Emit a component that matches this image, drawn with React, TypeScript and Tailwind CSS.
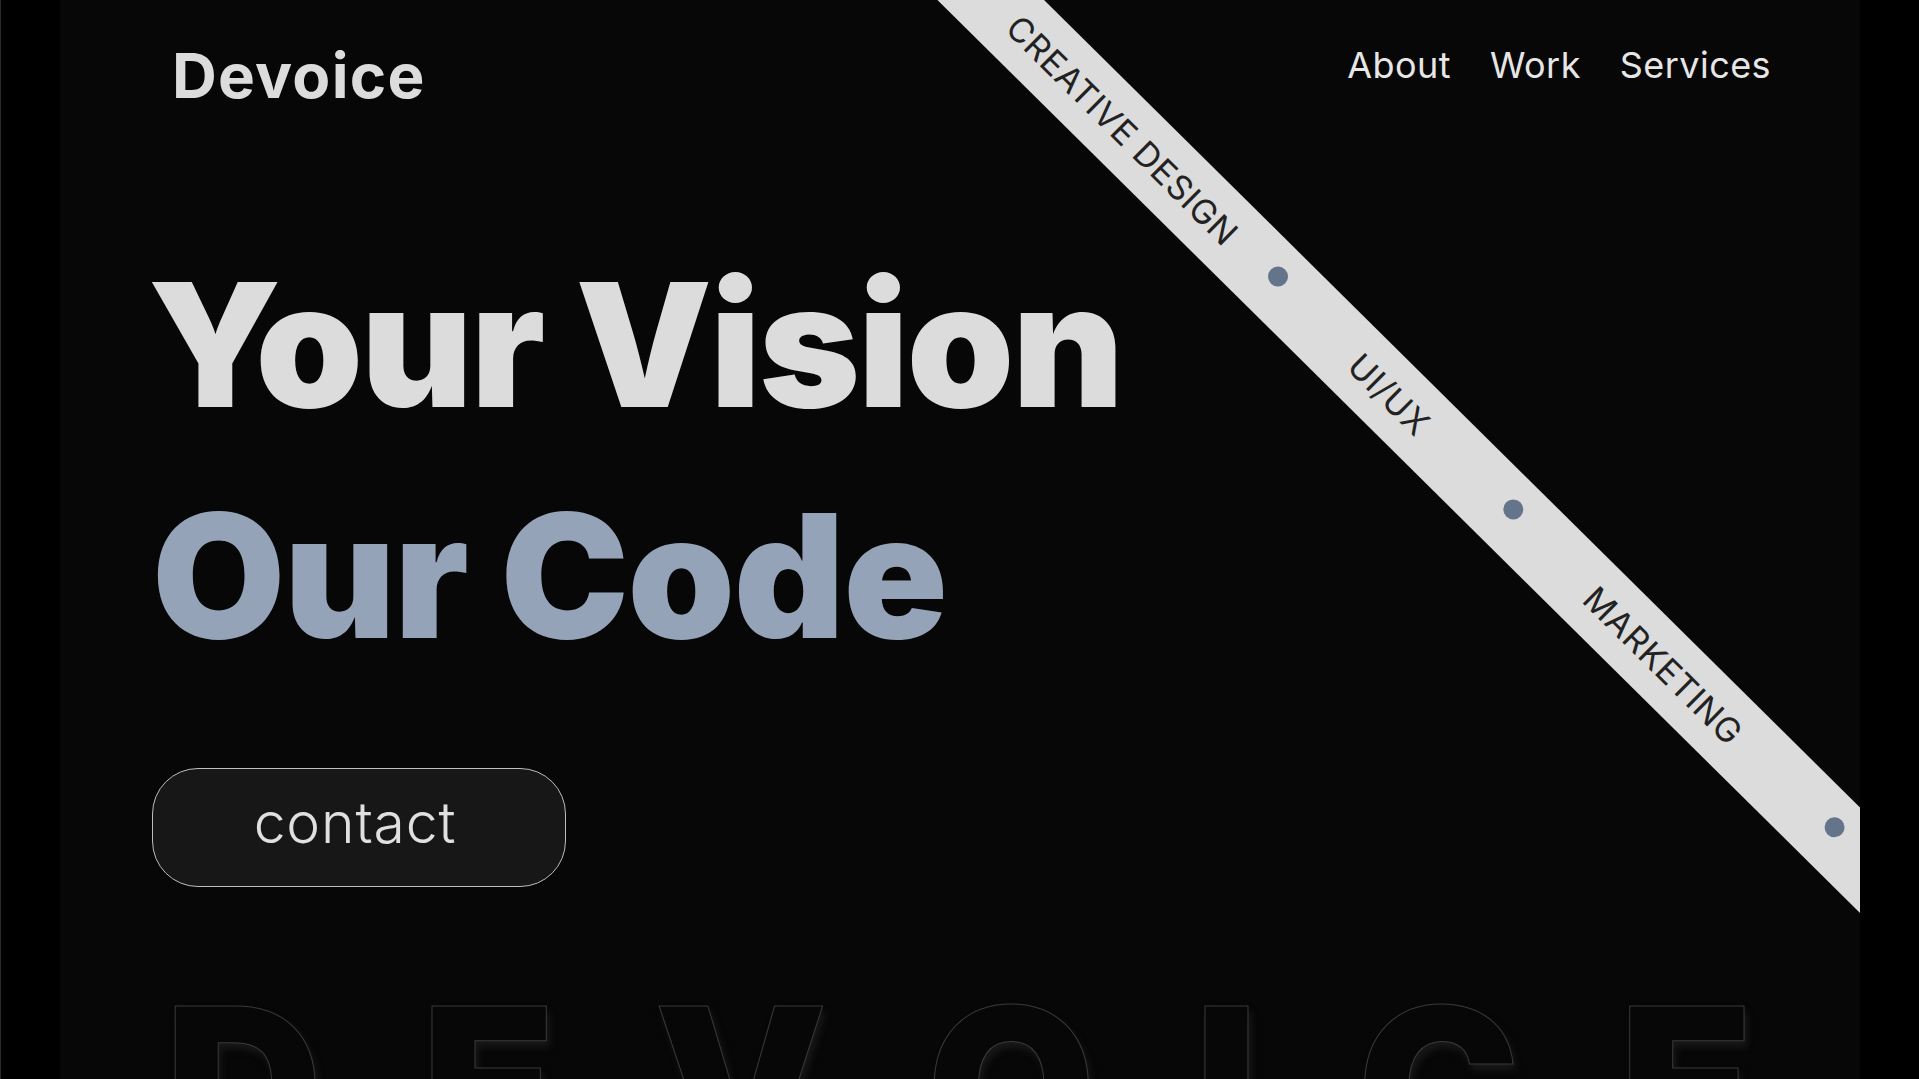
import React from 'react';

const navLinks = ['About', 'Work', 'Services'];
const bigLetters = ['D', 'E', 'V', 'O', 'I', 'C', 'E'];

function Dot({ className = '' }: { className?: string }) {
    return <span className={`mb-[12px] h-5 w-5 shrink-0 rounded-full bg-[#64748b] ${className}`} />;
}

function Ribbon() {
    return (
        <div className="absolute left-[883px] top-[-100px] z-10 flex h-[75px] w-[1500px] origin-top-left rotate-[44.7deg] items-center bg-[#dcdcdc] pl-[135px] text-[34px] leading-none tracking-[0.02em] text-[#222]">
            <span className="flex w-[309px] justify-center whitespace-nowrap">CREATIVE DESIGN</span>
            <Dot className="ml-[49px]" />
            <span className="ml-[102px] flex w-[100px] justify-center whitespace-nowrap">UI/UX</span>
            <Dot className="ml-[109px]" />
            <span className="ml-[106px] flex w-[201px] justify-center whitespace-nowrap">MARKETING</span>
            <Dot className="ml-[125px]" />
        </div>
    );
}

export default function App() {
    return (
        <div className="h-screen w-full overflow-hidden border-l border-[#2a2a2a] bg-black [font-family:Inter,sans-serif]">
            <div className="relative mx-auto h-full w-[1800px] overflow-hidden bg-[#070707]">
                <Ribbon />

                {/* Header */}
                <header className="flex items-start justify-between pl-[112px] pr-[89px] pt-[45px]">
                    <div className="text-[62px] font-bold leading-none tracking-[0.02em] text-[#dcdcdc]">Devoice</div>
                    <nav className="mt-[2px] flex gap-[39px] text-[36px] leading-none tracking-[0.012em] text-[#e6e6e6]">
                        {navLinks.map((link) => (
                            <a key={link} href="#">{link}</a>
                        ))}
                    </nav>
                </header>

                {/* Hero */}
                <main className="mt-[122px] pl-[88px]">
                    <h1 className="text-[172px] font-black leading-[231px] tracking-[-0.012em]">
                        <span className="block text-[#dcdcdc]">Your Vision</span>
                        <span className="ml-[4px] block tracking-[-0.008em] text-[#94a3b8]">Our Code</span>
                    </h1>
                    <button className="ml-[4px] mt-[77px] flex h-[119px] w-[414px] items-center justify-center rounded-[46px] border border-[#bdbdbd] bg-[#171717] pb-[10px] pr-[8px] text-[57px] font-light leading-none tracking-[0.015em] text-[#e0e0e0]">
                        contact
                    </button>
                </main>

                {/* Outline wordmark */}
                <div className="mt-[90px] flex justify-between pl-[105px] pr-[107px] text-[218px] font-black leading-none text-[#070707] [-webkit-text-stroke:1px_#3a3a3a] [text-shadow:3px_6px_7px_#191919]">
                    {bigLetters.map((letter, i) => (
                        <span key={i}>{letter}</span>
                    ))}
                </div>
            </div>
        </div>
    );
}
